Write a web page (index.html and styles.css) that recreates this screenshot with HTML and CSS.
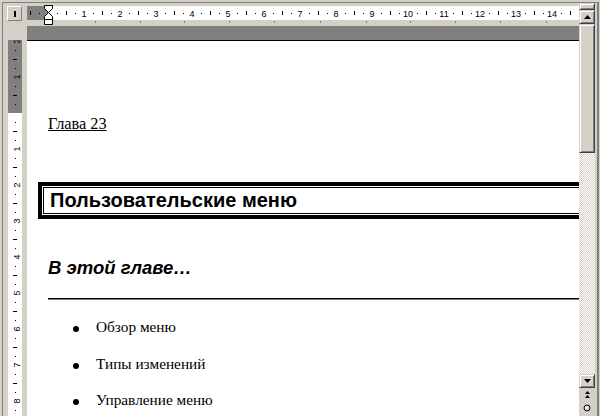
FILE: index.html
```html
<!DOCTYPE html>
<html lang="ru">
<head>
<meta charset="utf-8">
<title>Пользовательские меню</title>
<link rel="stylesheet" href="styles.css">
</head>
<body>
<div class="app">
  <div class="frame">
    <div class="main">
      <div class="top-row">
        <div class="corner">
          <div class="tab-sel"><span class="tab-glyph"></span></div>
        </div>
        <svg class="hruler" width="552" height="23" viewBox="0 0 552 23">
          <defs>
            <pattern id="ht" patternUnits="userSpaceOnUse" x="21" y="0" width="36" height="23">
              <rect x="9" y="10" width="1" height="1"/>
              <rect x="18" y="8" width="1" height="4"/>
              <rect x="27" y="10" width="1" height="1"/>
            </pattern>
          </defs>
          <rect x="0" y="3" width="21" height="14" fill="#808080"/>
          <rect x="21" y="3" width="531" height="14" fill="#fff"/>
          <rect x="0" y="3" width="552" height="14" fill="url(#ht)"/>
          <g class="rnum">
            <text x="57" y="13.5">1</text>
            <text x="93" y="13.5">2</text>
            <text x="129" y="13.5">3</text>
            <text x="165" y="13.5">4</text>
            <text x="201" y="13.5">5</text>
            <text x="237" y="13.5">6</text>
            <text x="273" y="13.5">7</text>
            <text x="309" y="13.5">8</text>
            <text x="345" y="13.5">9</text>
            <text x="381" y="13.5">10</text>
            <text x="417" y="13.5">11</text>
            <text x="453" y="13.5">12</text>
            <text x="489" y="13.5">13</text>
            <text x="525" y="13.5">14</text>
          </g>
          <g fill="#808080">
            <rect x="68" y="18" width="1" height="2"/>
            <rect x="113" y="18" width="1" height="2"/>
            <rect x="157" y="18" width="1" height="2"/>
            <rect x="202" y="18" width="1" height="2"/>
            <rect x="247" y="18" width="1" height="2"/>
            <rect x="293" y="18" width="1" height="2"/>
            <rect x="339" y="18" width="1" height="2"/>
            <rect x="383" y="18" width="1" height="2"/>
            <rect x="428" y="18" width="1" height="2"/>
            <rect x="473" y="18" width="1" height="2"/>
            <rect x="519" y="18" width="1" height="2"/>
          </g>
          <g fill="#fff" stroke="#000" stroke-width="1">
            <path d="M17.5 2.5H25.5V5.5L21.5 9.5L17.5 5.5Z"/>
            <path d="M21.5 9.5L25.5 13.5V16.5H17.5V13.5Z"/>
            <path d="M17.5 16.5H25.5V21.5H17.5Z"/>
          </g>
        </svg>
      </div>
      <div class="gray-row">
        <div class="corner2"></div>
        <div class="dark-band"></div>
      </div>
      <div class="body-row">
        <div class="vcol">
          <svg class="vruler" width="14" height="376" viewBox="0 0 14 376">
            <defs>
              <pattern id="vt" patternUnits="userSpaceOnUse" x="0" y="73" width="14" height="36">
                <rect x="7" y="9" width="1" height="1"/>
                <rect x="5" y="18" width="4" height="1"/>
                <rect x="7" y="27" width="1" height="1"/>
              </pattern>
            </defs>
            <rect x="0" y="0" width="14" height="73" fill="#808080"/>
            <rect x="0" y="73" width="14" height="303" fill="#fff"/>
            <rect x="0" y="0" width="14" height="376" fill="url(#vt)"/>
            <g class="rnum">
              <text transform="translate(11.5 1) rotate(-90)">2</text>
              <text transform="translate(11.5 37) rotate(-90)">1</text>
              <text transform="translate(11.5 109) rotate(-90)">1</text>
              <text transform="translate(11.5 145) rotate(-90)">2</text>
              <text transform="translate(11.5 181) rotate(-90)">3</text>
              <text transform="translate(11.5 217) rotate(-90)">4</text>
              <text transform="translate(11.5 253) rotate(-90)">5</text>
              <text transform="translate(11.5 289) rotate(-90)">6</text>
              <text transform="translate(11.5 325) rotate(-90)">7</text>
              <text transform="translate(11.5 361) rotate(-90)">8</text>
            </g>
          </svg>
        </div>
        <div class="page">
          <p class="chapter">Глава 23</p>
          <div class="title-box">
            <div class="title-inner">Пользовательские меню</div>
          </div>
          <p class="intro">В этой главе…</p>
          <div class="rule"></div>
          <ul class="list">
            <li><span class="bullet"></span><span>Обзор меню</span></li>
            <li><span class="bullet"></span><span>Типы изменений</span></li>
            <li><span class="bullet"></span><span>Управление меню</span></li>
          </ul>
        </div>
      </div>
    </div>
    <div class="vscroll">
      <div class="split raised"></div>
      <div class="sbtn raised up">
        <svg width="7" height="4" viewBox="0 0 7 4"><path d="M3.5 0L7 4H0Z"/></svg>
      </div>
      <div class="thumb raised"></div>
      <div class="track"></div>
      <div class="sbtn raised down">
        <svg width="7" height="4" viewBox="0 0 7 4"><path d="M0 0H7L3.5 4Z"/></svg>
      </div>
      <div class="browse">
        <svg width="5" height="7" viewBox="0 0 5 7"><path d="M2.5 0L5 3H0Z M2.5 4L5 7H0Z"/></svg>
      </div>
      <div class="browse">
        <svg width="8" height="8" viewBox="0 0 8 8"><circle cx="4" cy="4" r="3" fill="#d4d0c8" stroke="#000" stroke-width="1"/><circle cx="3.5" cy="3.5" r="1" fill="#fff"/></svg>
      </div>
      <div class="browse">
        <svg width="5" height="7" viewBox="0 0 5 7"><path d="M0 0H5L2.5 3Z M0 4H5L2.5 7Z"/></svg>
      </div>
    </div>
  </div>
</div>
</body>
</html>
```

FILE: styles.css
```css
* { box-sizing: border-box; }
html, body { margin: 0; padding: 0; }
body {
  width: 600px;
  height: 416px;
  overflow: hidden;
  background: #d4d0c8;
  font-family: "Liberation Sans", Arial, sans-serif;
}
.app {
  width: 600px;
  height: 416px;
  padding: 2px 1px 0 2px;
}
.frame {
  display: flex;
  height: 414px;
  border-top: 1px solid #808080;
  border-left: 1px solid #808080;
  border-right: 2px solid #808080;
  overflow: hidden;
}
.main {
  width: 576px;
  display: flex;
  flex-direction: column;
}
.top-row {
  height: 23px;
  display: flex;
  flex: none;
}
.corner {
  width: 24px;
  padding: 3px 0 0 4px;
}
.tab-sel {
  width: 15px;
  height: 15px;
  border: 1px solid;
  border-color: #fff #808080 #808080 #fff;
  background: #d4d0c8;
  display: flex;
  align-items: center;
  justify-content: center;
}
.tab-glyph {
  display: block;
  width: 2px;
  height: 6px;
  background: #000;
}
.hruler {
  display: block;
  overflow: visible;
}
.rnum text {
  font-family: "Liberation Sans", Arial, sans-serif;
  font-size: 9px;
  text-anchor: middle;
  fill: #000;
}
.gray-row {
  height: 14px;
  display: flex;
  flex: none;
}
.corner2 { width: 24px; }
.dark-band { flex: 1; background: #808080; }
.body-row {
  flex: 1;
  display: flex;
  min-height: 0;
}
.vcol {
  width: 24px;
  padding-left: 5px;
  flex: none;
}
.vruler { display: block; }
.page {
  width: 552px;
  background: #fff;
  border-top: 1px solid #000;
  overflow: hidden;
  font-family: "Liberation Serif", "Times New Roman", serif;
  color: #000;
}
.chapter {
  margin: 74px 0 0 21px;
  font-size: 16.3px;
  line-height: 18px;
  text-decoration: underline;
}
.title-box {
  margin: 49px 0 0 11px;
  width: 620px;
  border: 4px solid #000;
  padding: 1px;
}
.title-inner {
  height: 27px;
  border: 1px solid #000;
  padding-left: 6px;
  font-family: "Liberation Sans", Arial, sans-serif;
  font-weight: bold;
  font-size: 20px;
  line-height: 25px;
  white-space: nowrap;
}
.intro {
  margin: 38px 0 0 21px;
  font-family: "Liberation Sans", Arial, sans-serif;
  font-weight: bold;
  font-style: italic;
  font-size: 18.5px;
  line-height: 22px;
}
.rule {
  margin: 19px 0 0 21px;
  width: 600px;
  height: 2px;
  border-top: 1px solid #000;
  border-bottom: 1px solid #808080;
}
.list {
  margin: 18px 0 0 0;
  padding: 0;
  list-style: none;
}
.list li {
  display: flex;
  align-items: flex-start;
  height: 18px;
  line-height: 18px;
  margin-bottom: 18.5px;
  font-size: 15.3px;
}
.bullet {
  flex: none;
  width: 6px;
  height: 6px;
  border-radius: 50%;
  background: #000;
  margin: 8px 17px 0 46px;
}
.vscroll {
  width: 16px;
  margin-right: 2px;
  display: flex;
  flex-direction: column;
  flex: none;
  overflow: hidden;
}
.raised {
  background: #d4d0c8;
  border: 1px solid;
  border-color: #d4d0c8 #404040 #404040 #d4d0c8;
  box-shadow: inset 1px 1px #fff, inset -1px -1px #808080;
}
.split { height: 7px; flex: none; }
.sbtn {
  height: 14px;
  flex: none;
  display: flex;
  align-items: center;
  justify-content: center;
}
.sbtn svg, .browse svg { display: block; fill: #000; }
.thumb { height: 129px; flex: none; }
.track {
  height: 221px;
  flex: none;
  background-color: #fff;
  background-image: conic-gradient(#d4d0c8 25%, #fff 0 50%, #d4d0c8 0 75%, #fff 0);
  background-size: 2px 2px;
}
.browse {
  height: 13px;
  flex: none;
  display: flex;
  align-items: center;
  justify-content: center;
}
```
